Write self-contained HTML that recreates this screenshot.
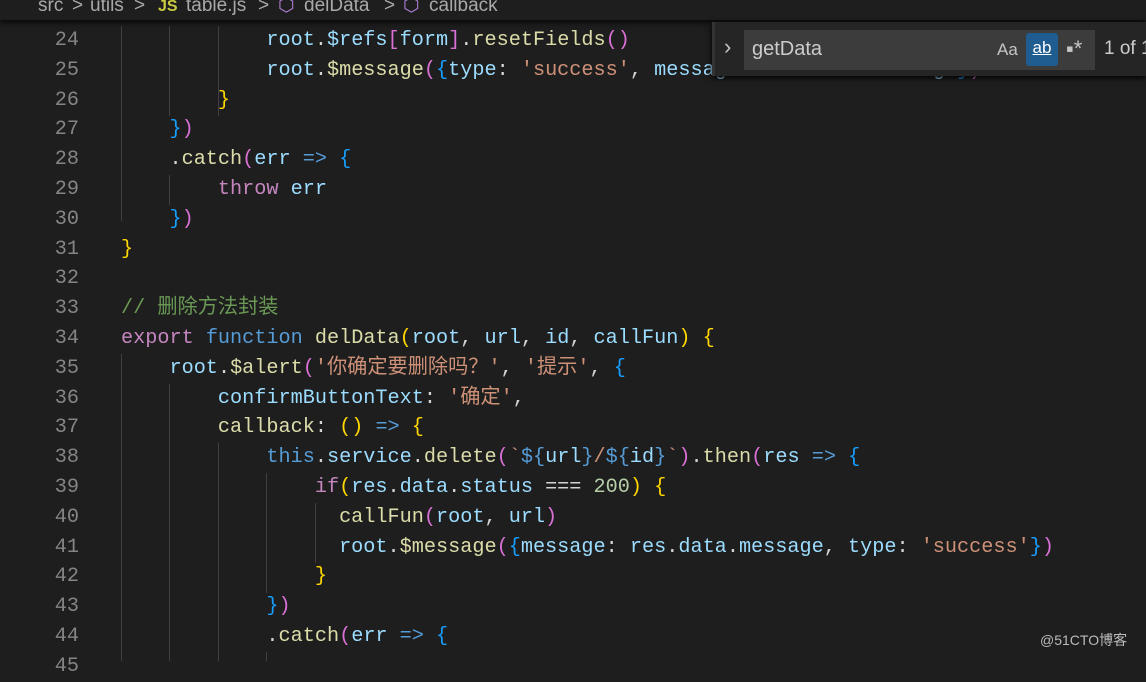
<!DOCTYPE html>
<html><head><meta charset="utf-8"><style>
body{margin:0;width:1146px;height:659px;background:#1e1e1e;overflow:hidden;position:relative;font-family:"Liberation Mono","Noto Sans CJK SC",monospace;}
.bc{position:absolute;left:0;top:0;width:1146px;height:20px;background:#1e1e1e;box-shadow:0 3px 5px #0a0a0a;font-family:"Liberation Sans",sans-serif;font-size:19px;color:#a9a9a9;line-height:14px;z-index:3;overflow:hidden}
.bc span{position:absolute;top:-1px}
.ln{position:absolute;left:0;width:79px;text-align:right;color:#858585;font-size:20.2px;line-height:29.8px}
.cd{position:absolute;left:121px;white-space:pre;font-size:20.2px;line-height:29.8px;color:#d4d4d4}
.g{position:absolute;width:1px;background:#404040}
.v{color:#9cdcfe}.f{color:#dcdcaa}.k{color:#569cd6}.p{color:#c586c0}.s{color:#ce9178}.c{color:#6a9955}
.y{color:#ffd700}.o{color:#da70d6}.b{color:#179fff}
.find{position:absolute;left:712px;top:22px;width:434px;height:54px;background:#252526;box-shadow:0 2px 6px #000;z-index:4;font-family:"Liberation Sans",sans-serif;white-space:nowrap}
.inp{position:absolute;left:32px;top:8px;width:351px;height:40px;background:#3c3c3c}
</style></head><body>
<div class="bc"><span style="left:38px">src</span><span style="left:72px">&gt;</span><span style="left:90px">utils</span><span style="left:134px">&gt;</span><span style="left:158px;color:#cbcb41;font-weight:bold;font-size:16px;top:0">JS</span><span style="left:186px">table.js</span><span style="left:258px">&gt;</span><span style="left:278px;color:#b180d7">⬡</span><span style="left:304px">delData</span><span style="left:384px">&gt;</span><span style="left:403px;color:#b180d7">⬡</span><span style="left:429px">callback</span></div>

<div class="g" style="left:121px;top:26px;height:195px"></div>
<div class="g" style="left:169px;top:26px;height:90px"></div>
<div class="g" style="left:218px;top:26px;height:90px"></div>
<div class="g" style="left:169px;top:175px;height:30px"></div>
<div class="g" style="left:121px;top:354px;height:307px"></div>
<div class="g" style="left:169px;top:384px;height:277px"></div>
<div class="g" style="left:218px;top:443px;height:218px"></div>
<div class="g" style="left:266px;top:473px;height:120px"></div>
<div class="g" style="left:315px;top:503px;height:60px"></div>
<div class="g" style="left:266px;top:652px;height:9px"></div>

<div class="ln" style="top:26px">24<br>25<br>26<br>27<br>28<br>29<br>30<br>31<br>32<br>33<br>34<br>35<br>36<br>37<br>38<br>39<br>40<br>41<br>42<br>43<br>44<br>45</div>
<div class="cd" style="top:26px">            <span class="v">root</span>.<span class="v">$refs</span><span class="o">[</span><span class="v">form</span><span class="o">]</span>.<span class="f">resetFields</span><span class="o">()</span>
            <span class="v">root</span>.<span class="f">$message</span><span class="o">(</span><span class="b">{</span><span class="v">type</span>: <span class="s">'success'</span>, <span class="v">message</span>: <span class="v">res</span>.<span class="v">data</span>.<span class="v">message</span><span class="b">}</span><span class="o">)</span>
        <span class="y">}</span>
    <span class="b">}</span><span class="o">)</span>
    .<span class="f">catch</span><span class="o">(</span><span class="v">err</span> <span class="k">=&gt;</span> <span class="b">{</span>
        <span class="p">throw</span> <span class="v">err</span>
    <span class="b">}</span><span class="o">)</span>
<span class="y">}</span>

<span class="c">// 删除方法封装</span>
<span class="p">export</span> <span class="k">function</span> <span class="f">delData</span><span class="y">(</span><span class="v">root</span>, <span class="v">url</span>, <span class="v">id</span>, <span class="v">callFun</span><span class="y">)</span> <span class="y">{</span>
    <span class="v">root</span>.<span class="f">$alert</span><span class="o">(</span><span class="s">'你确定要删除吗？'</span>, <span class="s">'提示'</span>, <span class="b">{</span>
        <span class="v">confirmButtonText</span>: <span class="s">'确定'</span>,
        <span class="f">callback</span>: <span class="y">()</span> <span class="k">=&gt;</span> <span class="y">{</span>
            <span class="k">this</span>.<span class="v">service</span>.<span class="f">delete</span><span class="o">(</span><span class="s">`</span><span class="k">${</span><span class="v">url</span><span class="k">}</span><span class="s">/</span><span class="k">${</span><span class="v">id</span><span class="k">}</span><span class="s">`</span><span class="o">)</span>.<span class="f">then</span><span class="o">(</span><span class="v">res</span> <span class="k">=&gt;</span> <span class="b">{</span>
                <span class="p">if</span><span class="y">(</span><span class="v">res</span>.<span class="v">data</span>.<span class="v">status</span> === <span class="s" style="color:#b5cea8">200</span><span class="y">)</span> <span class="y">{</span>
                  <span class="f">callFun</span><span class="o">(</span><span class="v">root</span>, <span class="v">url</span><span class="o">)</span>
                  <span class="v">root</span>.<span class="f">$message</span><span class="o">(</span><span class="b">{</span><span class="v">message</span>: <span class="v">res</span>.<span class="v">data</span>.<span class="v">message</span>, <span class="v">type</span>: <span class="s">'success'</span><span class="b">}</span><span class="o">)</span>
                <span class="y">}</span>
            <span class="b">}</span><span class="o">)</span>
            .<span class="f">catch</span><span class="o">(</span><span class="v">err</span> <span class="k">=&gt;</span> <span class="b">{</span>
</div>

<div class="find">
<div style="position:absolute;left:0;top:0;width:3px;height:54px;background:#333"></div>
<div style="position:absolute;left:12px;top:12px;color:#c5c5c5;font-size:22px">›</div>
<div class="inp">
<div style="position:absolute;left:8px;top:8px;color:#cccccc;font-size:20px">getData</div>
<div style="position:absolute;left:253px;top:10px;color:#c5c5c5;font-size:17px">Aa</div>
<div style="position:absolute;left:282px;top:3px;width:32px;height:33px;background:#1f5c8f;border-radius:3px;color:#fff;font-size:17px;text-align:center;line-height:30px;text-decoration:underline">ab</div>
<div style="position:absolute;left:322px;top:6px;color:#c5c5c5;font-size:22px">▪*</div>
</div>
<div style="position:absolute;left:392px;top:16px;color:#cccccc;font-size:19px">1 of 1</div>
</div>
<div style="position:absolute;left:1040px;top:630px;color:#bbb;font-family:'Liberation Sans','Noto Sans CJK SC',sans-serif;font-size:14px">@51CTO博客</div>
</body></html>
